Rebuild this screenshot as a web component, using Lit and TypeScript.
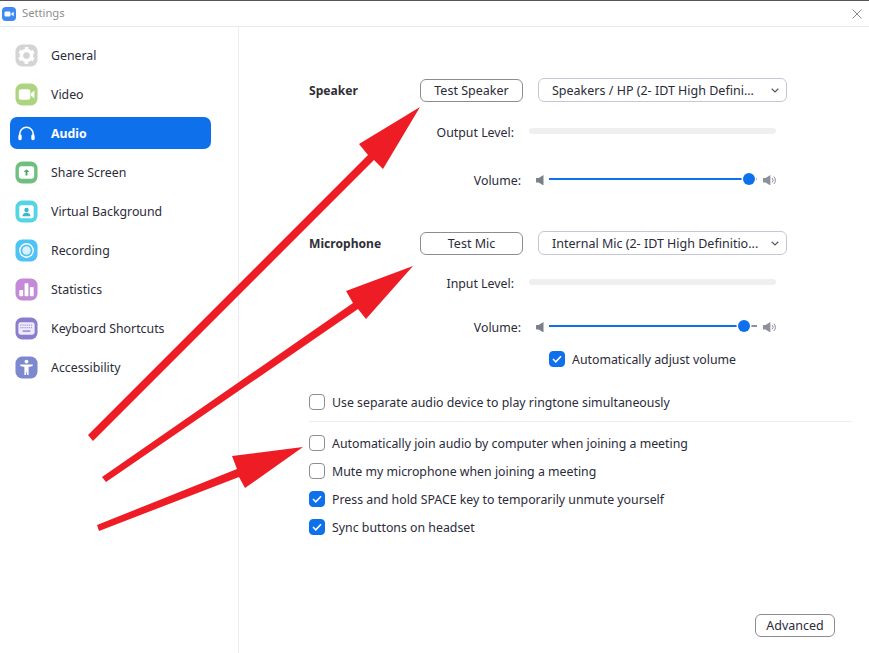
import { LitElement, html, css, svg } from "lit";
import { customElement } from "lit/decorators.js";

const navItems: { label: string; color: string; glyph: unknown; active?: boolean }[] = [
  { label: "General", color: "#d4d4d4", glyph: svg`<circle cx="12" cy="12" r="5.300" fill="none" stroke="#fff" stroke-width="3.600"/><circle cx="12" cy="12" r="7.600" fill="none" stroke="#fff" stroke-width="2.400" stroke-dasharray="3.800 4.160" stroke-dashoffset="1.900" transform="rotate(-90 12 12)"/>` },
  { label: "Video", color: "#add581", glyph: svg`<rect x="4" y="6.500" width="12" height="11" rx="2.400" fill="#fff"/><path d="M16.500 11l3.800-3.200v8.400L16.500 13z" fill="#fff"/>` },
  { label: "Audio", color: "transparent", active: true, glyph: svg`<path d="M5 17v-4.500a7 7 0 0 1 14 0V17" fill="none" stroke="#fff" stroke-width="1.600"/><rect x="3.500" y="13" width="3.500" height="6" rx="1.500" fill="#fff"/><rect x="17" y="13" width="3.500" height="6" rx="1.500" fill="#fff"/>` },
  { label: "Share Screen", color: "#6fbf7f", glyph: svg`<rect x="4" y="5.500" width="16" height="13" rx="2.500" fill="#fff"/><path d="M12 8.500l3 3h-2v3.500h-2v-3.500H9z" fill="#4fa866"/>` },
  { label: "Virtual Background", color: "#55d4e3", glyph: svg`<rect x="4.500" y="5.500" width="15" height="13.500" rx="2" fill="#fff"/><circle cx="12" cy="10.500" r="2.300" fill="#3bb8cc"/><path d="M7.800 17c0-2.600 2-3.700 4.200-3.700s4.200 1.100 4.200 3.700z" fill="#3bb8cc"/>` },
  { label: "Recording", color: "#4fc3f3", glyph: svg`<circle cx="12" cy="12" r="7" fill="none" stroke="#fff" stroke-width="1.400"/><circle cx="12" cy="12" r="4.400" fill="#d8f1fc"/>` },
  { label: "Statistics", color: "#c48ad7", glyph: svg`<rect x="4.500" y="12.500" width="4" height="6.500" rx=".8" fill="#fff"/><rect x="10" y="5.500" width="4" height="13.500" rx=".8" fill="#fff"/><rect x="15.500" y="9.500" width="4" height="9.500" rx=".8" fill="#fff"/>` },
  { label: "Keyboard Shortcuts", color: "#8b7dce", glyph: svg`<rect x="3.500" y="5.500" width="17" height="13" rx="2.500" fill="#eeeafa"/><path d="M5.500 8.500h13M5.500 11h13" stroke="#a89ddd" stroke-width="1.300" stroke-dasharray="1.300 .9"/><rect x="8" y="14" width="8" height="1.400" fill="#8b7dce"/>` },
  { label: "Accessibility", color: "#7c89cf", glyph: svg`<circle cx="12" cy="5.800" r="2" fill="#fff"/><path d="M5.500 8.800h13v1.700l-4.300.9v8.300h-1.600l-.6-4.700-.6 4.700H9.800v-8.300l-4.300-.9z" fill="#fff"/>` },
];

const spkLow = html`<svg class="spk-low" viewBox="0 0 9 12"><path d="M0 3.500h3L8.500 0v12L3 8.500H0z" fill="#7b7f8a"/></svg>`;
const spkHigh = html`<svg class="spk-high" viewBox="0 0 15 12"><path d="M0 3.500h3L8.500 0v12L3 8.500H0z" fill="#8d919b"/><path d="M10.500 3.500a3.500 3.500 0 0 1 0 5M12.500 1.800a6 6 0 0 1 0 8.400" fill="none" stroke="#7b7f8a" stroke-width="1"/></svg>`;
const chevron = html`<svg class="chevron" viewBox="0 0 8 5"><path d="M.7.800L4 4l3.300-3.200" fill="none" stroke="#55566a" stroke-width="1.200"/></svg>`;

@customElement("app-root")
export class AppRoot extends LitElement {
  static styles = css`
    :host {
      display: block;
      height: 653px;
      background: #fff;
      color: #2b2b3a;
      font-family: "Noto Sans", "Open Sans", sans-serif;
      font-size: 12.33px;
      overflow: hidden;
      position: relative;
    }
    .window { display: flex; flex-direction: column; height: 100%; border-top: 1px solid #555; box-sizing: border-box; }
    .titlebar {
      height: 25px; flex: none; display: flex; align-items: center; padding: 0 7px 0 2px;
      border-bottom: 1px solid #e8e8f0; color: #8f8f8f; font-size: 11.2px;
    }
    .title { margin-top: -2px; }
    .logo { width: 14px; height: 14px; flex: none; margin-right: 6px; }
    .close { width: 10px; height: 10px; margin-left: auto; }
    .body { flex: 1; display: flex; min-height: 0; }
    .sidebar {
      width: 239px; flex: none; box-sizing: border-box; border-right: 1px solid #ececf2;
      padding: 12px 0 0 10px; display: flex; flex-direction: column; gap: 7px;
    }
    .nav {
      width: 201px; height: 32px; flex: none; display: flex; align-items: center;
      padding-left: 5px; box-sizing: border-box; border-radius: 7px; gap: 13px;
    }
    .nav.active { background: #0e71eb; color: #fff; font-weight: 700; }
    .nav-icon { width: 23px; height: 23px; flex: none; display: block; }
    .main { flex: 1; display: flex; flex-direction: column; padding: 51px 17px 16px 70px; min-width: 0; }
    .row { display: flex; align-items: center; height: 20px; flex: none; }
    .row.head { height: 24px; }
    .heading { width: 111px; font-weight: 700; color: #2f2f38; font-size: 12.1px; }
    .btn {
      width: 103px; height: 23px; box-sizing: border-box; border: 1px solid #8c8c92; border-radius: 6px;
      display: flex; align-items: center; justify-content: center; background: #fff; font-size: 12.5px;
    }
    .select {
      margin-left: 15px; width: 249px; height: 24px; box-sizing: border-box; border: 1px solid #c6c6d6;
      border-radius: 6px; display: flex; align-items: center; padding: 0 7px 0 13px; white-space: nowrap; font-size: 12.5px;
    }
    .chevron { width: 8px; height: 5px; margin-left: auto; }
    .lbl { text-align: right; white-space: nowrap; padding-top: 2px; }
    .lvl-lbl { width: 205px; }
    .meter { margin-left: 15px; width: 247px; height: 6px; border-radius: 3px; background: #efefef; }
    .vol-lbl { width: 212px; }
    .spk-low { width: 8px; height: 10.500px; margin: 2px 0 0 15px; flex: none; }
    .spk-high { width: 15px; height: 10.500px; margin: 2px 0 0 5px; flex: none; }
    .track { position: relative; margin-left: 5px; width: 208px; height: 2px; background: #8d919b; flex: none; }
    .fill { height: 100%; background: #0e71eb; }
    .thumb {
      position: absolute; top: 50%; width: 12px; height: 12px; margin: -6px 0 0 -6px;
      border-radius: 50%; background: #0e71eb; box-shadow: 0 0 0 1.500px #fff;
    }
    .check { display: flex; align-items: center; gap: 7px; height: 20px; flex: none; white-space: nowrap; }
    .check.indent { margin-left: 240px; }
    .box {
      width: 16px; height: 16px; box-sizing: border-box; border: 1.500px solid #8e8e92; border-radius: 4px;
      flex: none; background: #fff; display: flex; align-items: center; justify-content: center;
    }
    .box.on { background: #0e71eb; border-color: #0e71eb; }
    .box svg { width: 10px; height: 8px; }
    .hr { height: 1px; background: #ececf2; flex: none; }
    .advanced { width: 80px; margin-top: auto; margin-right: 17px; align-self: flex-end; }
    .m19 { margin-top: 19px; } .m28 { margin-top: 28px; } .m42 { margin-top: 42px; }
    .m17 { margin-top: 17px; } .m24 { margin-top: 24px; } .m13 { margin-top: 13px; }
    .m23 { margin-top: 23px; } .m9 { margin-top: 9px; } .m11 { margin-top: 11px; } .m8 { margin-top: 8px; }
    .arrows { position: absolute; inset: 0; width: 869px; height: 653px; pointer-events: none; }
  `;

  private check(label: string, on: boolean, cls = "") {
    return html`<div class="check ${cls}">
      <span class="box ${on ? "on" : ""}">${on
        ? html`<svg viewBox="0 0 10 8"><path d="M1 4l2.800 2.800L9 1.200" fill="none" stroke="#fff" stroke-width="1.500"/></svg>`
        : ""}</span>
      <span>${label}</span>
    </div>`;
  }

  private volume(pos: number, cls: string) {
    return html`<div class="row ${cls}">
      <span class="lbl vol-lbl">Volume:</span>
      ${spkLow}
      <div class="track"><div class="fill" style="width:${pos}px"></div><div class="thumb" style="left:${pos}px"></div></div>
      ${spkHigh}
    </div>`;
  }

  render() {
    return html`
      <div class="window">
        <header class="titlebar">
          <svg class="logo" viewBox="0 0 14 14"><rect width="14" height="14" rx="4" fill="#3d8bf2"/><rect x="2.500" y="4.500" width="6" height="5" rx="1.200" fill="#fff"/><path d="M9.300 6.500l2.400-1.700v4.400L9.300 7.500z" fill="#fff"/></svg>
          <span class="title">Settings</span>
          <svg class="close" viewBox="0 0 10 10"><path d="M.5.500l9 9M9.500.500l-9 9" stroke="#8a8a8a" stroke-width="1"/></svg>
        </header>
        <div class="body">
          <nav class="sidebar">
            ${navItems.map(
              (n) => html`<div class="nav ${n.active ? "active" : ""}">
                <svg class="nav-icon" viewBox="0 0 24 24"><rect x=".5" y=".5" width="23" height="23" rx="7" fill="${n.color}"/>${n.glyph}</svg>
                <span>${n.label}</span>
              </div>`
            )}
          </nav>
          <main class="main">
            <div class="row head">
              <span class="heading">Speaker</span>
              <div class="btn">Test Speaker</div>
              <div class="select"><span>Speakers / HP (2- IDT High Defini...</span>${chevron}</div>
            </div>
            <div class="row m19"><span class="lbl lvl-lbl">Output Level:</span><div class="meter"></div></div>
            ${this.volume(200, "m28")}
            <div class="row head m42">
              <span class="heading">Microphone</span>
              <div class="btn">Test Mic</div>
              <div class="select"><span>Internal Mic (2- IDT High Definitio...</span>${chevron}</div>
            </div>
            <div class="row m17"><span class="lbl lvl-lbl">Input Level:</span><div class="meter"></div></div>
            ${this.volume(195, "m24")}
            ${this.check("Automatically adjust volume", true, "indent m13")}
            ${this.check("Use separate audio device to play ringtone simultaneously", false, "m23")}
            <div class="hr m9"></div>
            ${this.check("Automatically join audio by computer when joining a meeting", false, "m11")}
            ${this.check("Mute my microphone when joining a meeting", false, "m8")}
            ${this.check("Press and hold SPACE key to temporarily unmute yourself", true, "m8")}
            ${this.check("Sync buttons on headset", true, "m8")}
            <div class="btn advanced">Advanced</div>
          </main>
        </div>
      </div>
      <svg class="arrows" viewBox="0 0 869 653">
        <path fill="#ee1c25" d="M420 107L359 144 368 155 88 435 93 441 374 160 383 169z"/>
        <path fill="#ee1c25" d="M413 266L346 291 353 303 102 477 106 482 358 309 366 319z"/>
        <path fill="#ee1c25" d="M303 447L232 456 237 469 97 525 99 531 239 477 245 488z"/>
      </svg>
    `;
  }
}
